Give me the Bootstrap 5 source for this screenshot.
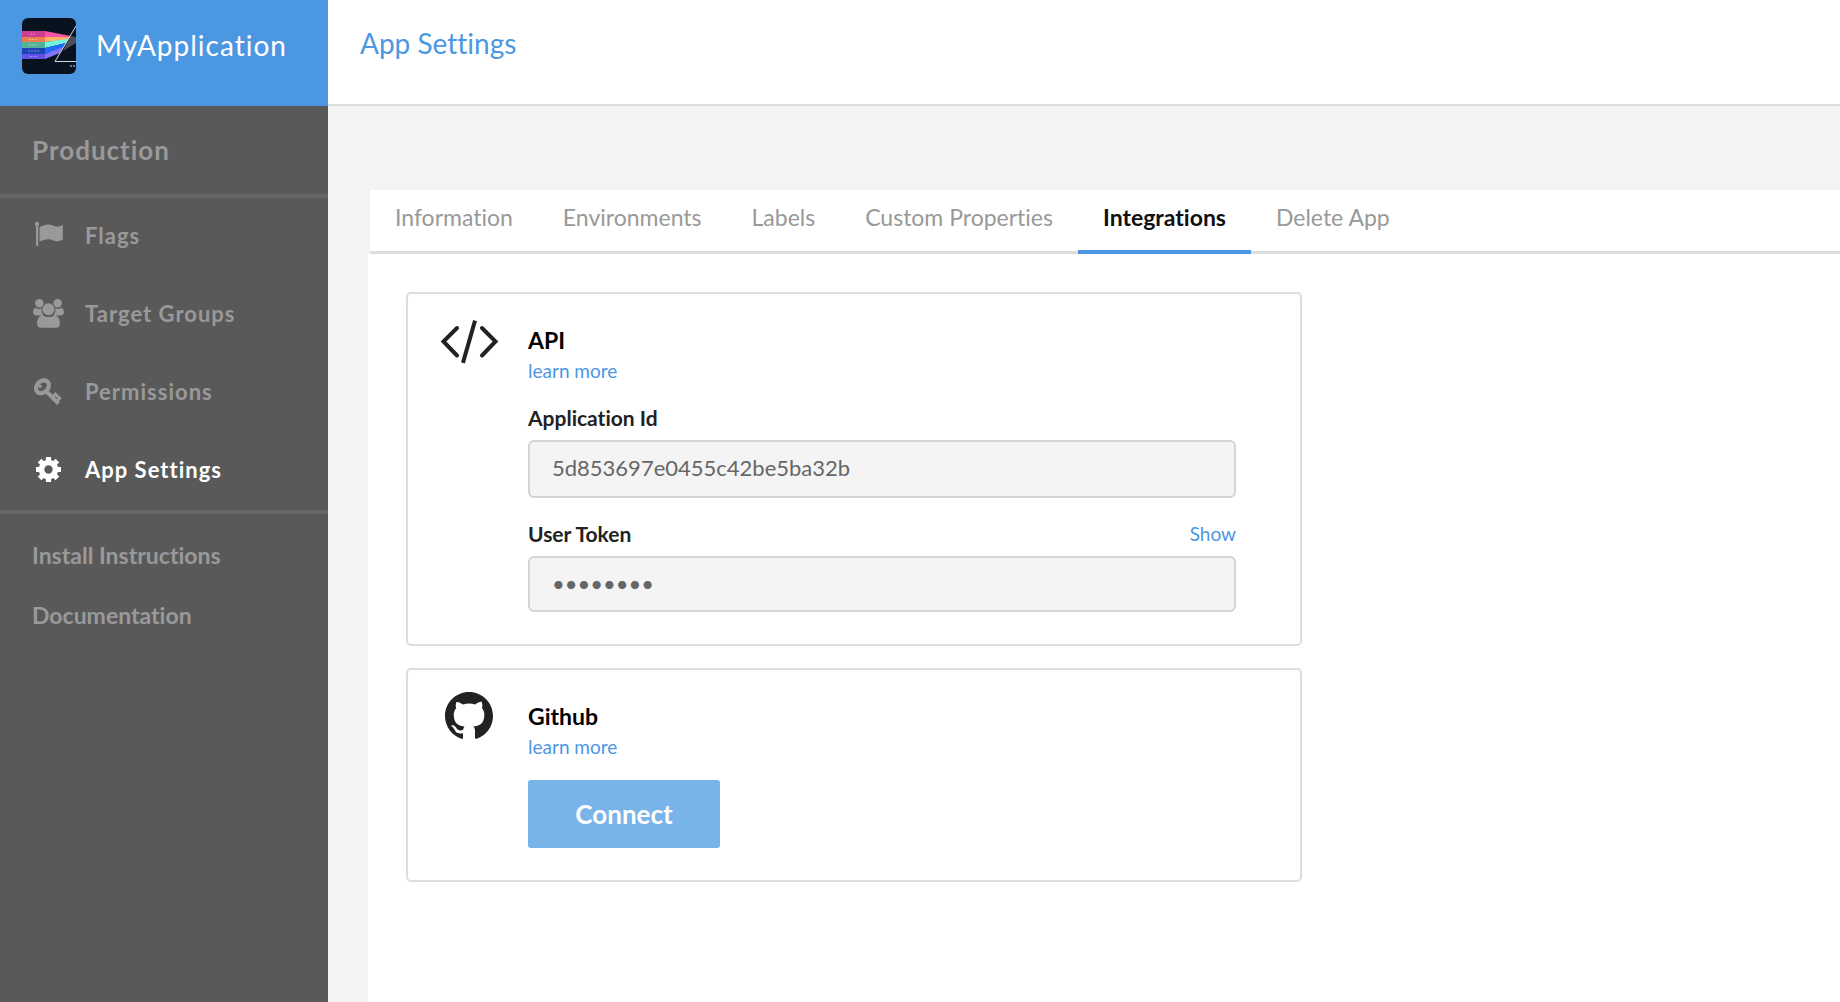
<!DOCTYPE html>
<html lang="en">
<head>
<meta charset="utf-8">
<meta name="viewport" content="width=device-width, initial-scale=1">
<title>App Settings - MyApplication</title>
<link href="https://cdn.jsdelivr.net/npm/bootstrap@5.3.0/dist/css/bootstrap.min.css" rel="stylesheet">
<style>
  :root { --brand: #4c97e2; --line: #ddd; }
  body { font-family: Lato, "Open Sans", sans-serif; font-size: 22px; font-variant-ligatures: none; background: #f3f3f3; color: #222; }
  a { color: var(--brand); text-decoration: none; }
  .app-side { width: 328px; background: #595959; color: #999; }
  .app-brand { height: 106px; padding: 18px 22px; gap: 20px; background: var(--brand); color: #fff; font-size: 28px; line-height: 54px; letter-spacing: 1px; }
  .app-brand:hover { color: #fff; }
  .brand-logo { width: 54px; height: 56px; border-radius: 6px; }
  .env-name { height: 92px; padding: 0 32px; font-size: 26px; font-weight: 700; letter-spacing: 1px; border-bottom: 4px solid #666; }
  .side-nav { border-bottom: 4px solid #666; }
  .side-nav .nav-link { height: 78px; padding: 0 32px 4px; gap: 20px; color: #999; font-weight: 700; letter-spacing: 1px; }
  .side-nav .nav-link svg { width: 33px; height: 32px; }
  .side-nav .nav-link.active { color: #fff; }
  .side-links { padding: 11px 0; }
  .side-links .nav-link { height: 60px; padding: 0 32px; color: #999; font-size: 23px; font-weight: 700; }
  .page-head { height: 106px; padding: 26px 32px; border-bottom: 2px solid var(--line); }
  .page-head h1 { font-size: 28px; line-height: 34px; color: var(--brand); }
  .page-body { padding: 84px 0 0 40px; }
  .tab-strip { margin-left: 2px; background: #fff; box-shadow: inset 0 -3px var(--line); }
  .tab-strip .nav-link { height: 64px; padding: 0 25px 6px; border-bottom: 4px solid transparent; color: #999; font-size: 23px; }
  .tab-strip .nav-link.active { color: #111; font-weight: 700; border-color: var(--brand); }
  .tab-panel { padding: 38px; gap: 22px; }
  .integration { max-width: 896px; border: 2px solid var(--line); border-radius: 5px; padding: 30px 64px 32px 32px; }
  .integration .glyph { width: 88px; }
  .integration h2 { font-size: 23px; line-height: 32px; font-weight: 700; color: #000; }
  .small-link { font-size: 19px; line-height: 30px; }
  .field-label { font-size: 21px; line-height: 26px; font-weight: 700; }
  .field-head { height: 28px; margin-bottom: 8px; }
  .integration .form-control { height: 58px; padding: 0 22px 4px; border: 2px solid #d4d4d4; border-radius: 6px; background: #f4f4f4; color: #666; font-size: 22px; }
  .integration .form-control[type=password] { height: 56px; padding: 0 22px 2px; }
  .stack { gap: 22px; margin-top: 18px; }
  .btn-connect { width: 192px; height: 68px; margin-top: 18px; border: 0; border-radius: 3px; background: #78b3ea; color: #fff; font-size: 26px; line-height: 66px; font-weight: 700; }
</style>
<script src="https://cdn.jsdelivr.net/npm/bootstrap@5.3.0/dist/js/bootstrap.bundle.min.js"></script>
</head>
<body>
<div class="d-flex min-vh-100">
  <aside class="app-side flex-shrink-0">
    <a class="app-brand d-flex align-items-start" href="#">
      <svg class="brand-logo flex-shrink-0" viewBox="0 0 54 56" aria-hidden="true">
        <rect width="54" height="56" fill="#091320"/>
        <path d="M0 13h23v6H0z" fill="#cf3c96"/><path d="M23 13l26 5-1 2-25-1z" fill="#f652a6"/>
        <path d="M0 19h23v5H0z" fill="#ea7e4f"/><path d="M23 19l25 0-2 3-23 2z" fill="#fbb164"/>
        <path d="M0 24h23v6H0z" fill="#54b199"/><path d="M23 24l23-3-2 4-21 5z" fill="#6ff5df"/>
        <path d="M0 30h23v6H0z" fill="#1c46b4"/><path d="M23 30l21-5-3 5-18 6z" fill="#2268fa"/>
        <path d="M0 36h23v5H0z" fill="#6650ec"/><path d="M23 36l18-7-3 6-15 6z" fill="#8275f5"/>
        <path d="M48 18l6 1v6l-13 8z" fill="#4a4f5a"/>
        <path d="M54 8L33 43.500h21" fill="none" stroke="#d6d9de" stroke-width="1"/>
        <path d="M8 16h6M7 21.500h9M7 27h8M6 33h11M8 38.500h7" stroke="#fff" stroke-opacity=".4" stroke-dasharray="2 1"/>
        <path d="M48 48h6" stroke="#9aa0a8" stroke-width="1.500" stroke-dasharray="2 1"/>
      </svg>
      <span>MyApplication</span>
    </a>
    <div class="env-name d-flex align-items-center">Production</div>
    <nav class="side-nav nav flex-column" aria-label="Application">
      <a class="nav-link d-flex align-items-center" href="#">
        <svg viewBox="0 0 33 32" fill="currentColor" aria-hidden="true"><circle cx="5" cy="5" r="2.200"/><path d="M4 6h2.200v21H4z"/><path d="M7.500 8.300C10 6.800 13 5.300 17 5.500s5.500 2.200 8.500 2.200c2 0 3.500-1 5.300-1.900v14.700c-2.200 1.200-4 2-6.500 1.800-3-.200-4.300-2-7.800-2-3.500 0-6 1-9 2.500z"/></svg>
        Flags
      </a>
      <a class="nav-link d-flex align-items-center" href="#">
        <svg viewBox="0 0 33 32" fill="currentColor" aria-hidden="true"><circle cx="7.300" cy="6.300" r="4.200"/><circle cx="25.700" cy="6.300" r="4.200"/><circle cx="16.500" cy="12.300" r="6"/><path d="M3.500 10.800c2 1.700 4.500 1.700 6.200.300-.6 3.400.3 5.200 1.800 7.400H4.300c-2 0-3.200-1.500-3.200-3.200 0-1.700.6-3.900 2.400-4.500zM29.500 10.800c-2 1.700-4.500 1.700-6.200.3.600 3.400-.3 5.200-1.800 7.400h7.200c2 0 3.200-1.500 3.200-3.200 0-1.700-.6-3.900-2.400-4.500zM10.700 18.200c3.400 2.500 8.200 2.500 11.600 0 4 .5 5.600 4.300 5.600 8.300 0 3-1.400 4.200-3.800 4.200H9c-2.500 0-3.900-1.200-3.900-4.200 0-4 1.600-7.800 5.600-8.300z"/></svg>
        Target Groups
      </a>
      <a class="nav-link d-flex align-items-center" href="#">
        <svg viewBox="0 0 33 32" fill="none" stroke="currentColor" aria-hidden="true"><ellipse cx="10.500" cy="11.800" rx="7.200" ry="5.600" stroke-width="4.200" transform="rotate(-45 10.500 11.800)"/><circle cx="8" cy="11.200" r="1" stroke-width="1.600"/><path d="M14 16l12.500 12.500" stroke-width="4"/><path d="M20 22.500l4.500-4.500M24.500 26.500l4-4M22.500 18.500l5.500 5" stroke-width="3"/></svg>
        Permissions
      </a>
      <a class="nav-link active d-flex align-items-center" href="#" aria-current="page">
        <svg viewBox="0 0 33 32" aria-hidden="true"><g fill="none" stroke="currentColor" transform="translate(16.500 16.500)"><circle r="7" stroke-width="5.600"/><path stroke-width="5.200" d="M0-8.500v-4M0 8.500v4M-8.500 0h-4M8.500 0h4M6-6l2.900-2.900M-6-6l-2.900-2.900M6 6l2.900 2.900M-6 6l-2.900 2.900"/></g></svg>
        App Settings
      </a>
    </nav>
    <nav class="side-links nav flex-column" aria-label="Help">
      <a class="nav-link d-flex align-items-center" href="#">Install Instructions</a>
      <a class="nav-link d-flex align-items-center" href="#">Documentation</a>
    </nav>
  </aside>

  <main class="flex-grow-1 d-flex flex-column">
    <header class="page-head bg-white"><h1 class="fw-normal m-0">App Settings</h1></header>
    <div class="page-body flex-grow-1 d-flex flex-column">
      <nav class="tab-strip nav" aria-label="Settings">
        <a class="nav-link d-flex align-items-center" href="#">Information</a>
        <a class="nav-link d-flex align-items-center" href="#">Environments</a>
        <a class="nav-link d-flex align-items-center" href="#">Labels</a>
        <a class="nav-link d-flex align-items-center" href="#">Custom Properties</a>
        <a class="nav-link active d-flex align-items-center" href="#" aria-current="page">Integrations</a>
        <a class="nav-link d-flex align-items-center" href="#">Delete App</a>
      </nav>
      <div class="tab-panel bg-white flex-grow-1 d-flex flex-column">
        <section class="integration d-flex">
          <div class="glyph flex-shrink-0">
            <svg class="d-block" width="60" height="44" viewBox="1 4 60 44" overflow="visible" fill="none" stroke="#222" stroke-width="4" stroke-linecap="round" stroke-linejoin="miter" aria-hidden="true"><path d="M18 8L4.500 21.500L18 35.500M43 8L56.500 21.500L43 35.500"/><path d="M35.500 2.500L24.500 41" stroke-linecap="square" stroke-width="4"/></svg>
          </div>
          <div class="flex-grow-1">
            <h2 class="m-0">API</h2>
            <a class="small-link d-block" href="#">learn more</a>
            <div class="stack d-flex flex-column">
              <div>
                <div class="field-head d-flex justify-content-between align-items-center">
                  <label class="field-label" for="appId">Application Id</label>
                </div>
                <input class="form-control" id="appId" type="text" value="5d853697e0455c42be5ba32b" readonly>
              </div>
              <div>
                <div class="field-head d-flex justify-content-between align-items-center">
                  <label class="field-label" for="userToken">User Token</label>
                  <a class="small-link" href="#">Show</a>
                </div>
                <input class="form-control" id="userToken" type="password" value="12345678" readonly>
              </div>
            </div>
          </div>
        </section>
        <section class="integration d-flex">
          <div class="glyph flex-shrink-0">
            <svg class="d-block" width="60" height="44" viewBox="0 0 60 44" overflow="visible" aria-hidden="true"><path transform="translate(5 -8) scale(3)" fill="#222" fill-rule="evenodd" d="M8 0C3.580 0 0 3.580 0 8c0 3.540 2.290 6.530 5.470 7.590.4.070.55-.17.55-.38 0-.19-.01-.82-.01-1.490-2.010.37-2.530-.49-2.690-.94-.09-.23-.48-.94-.82-1.130-.28-.15-.68-.52-.01-.53.63-.01 1.080.58 1.230.82.72 1.210 1.870.87 2.330.66.07-.52.28-.87.51-1.070-1.780-.2-3.640-.89-3.640-3.950 0-.87.31-1.590.82-2.150-.08-.2-.36-1.020.08-2.120 0 0 .67-.21 2.200.82.64-.18 1.320-.27 2-.27s1.360.09 2 .27c1.530-1.040 2.200-.82 2.200-.82.44 1.100.16 1.920.08 2.120.51.56.82 1.270.82 2.150 0 3.070-1.870 3.750-3.650 3.950.29.25.54.73.54 1.480 0 1.070-.01 1.930-.01 2.200 0 .21.15.46.55.38A8.010 8.010 0 0 0 16 8c0-4.420-3.580-8-8-8z"/></svg>
          </div>
          <div class="flex-grow-1">
            <h2 class="m-0">Github</h2>
            <a class="small-link d-block" href="#">learn more</a>
            <button class="btn-connect btn d-block p-0" type="button">Connect</button>
          </div>
        </section>
      </div>
    </div>
  </main>
</div>
</body>
</html>
